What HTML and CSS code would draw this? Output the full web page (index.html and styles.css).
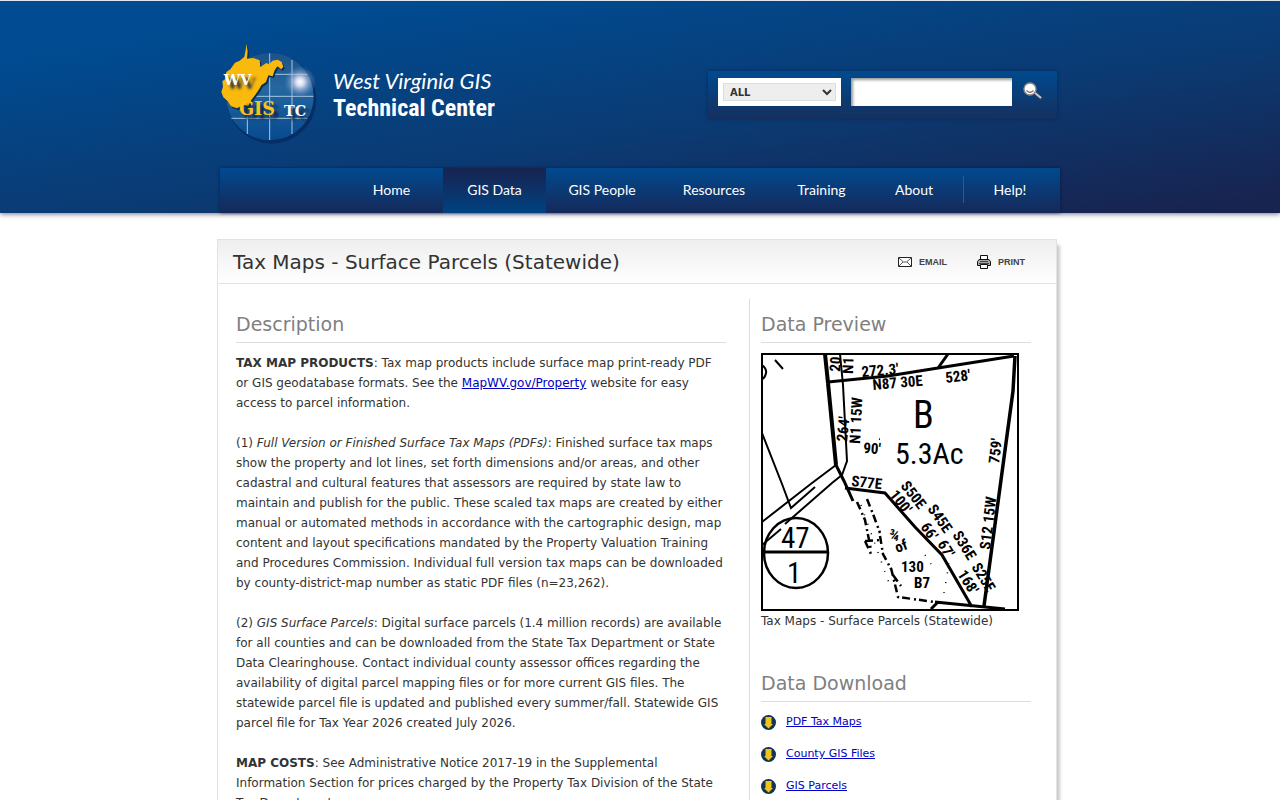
FILE: index.html
```html
<!DOCTYPE html>
<html lang="en">
<head>
<meta charset="utf-8">
<title>Tax Maps - Surface Parcels (Statewide)</title>
<link rel="stylesheet" href="styles.css">
</head>
<body>
<header class="site-header">
  <div class="wrap">
    <div class="masthead">
      <a class="brand" href="#">
        <svg class="globe" viewBox="24 18 300 312" aria-hidden="true">
          <defs>
            <radialGradient id="shine" cx="270" cy="138" r="48" gradientUnits="userSpaceOnUse"><stop offset="0" stop-color="#fff"/><stop offset=".25" stop-color="#d8dcf0"/><stop offset="1" stop-color="#5d86b8" stop-opacity="0"/></radialGradient>
            <linearGradient id="sea" x1="0" y1="0" x2="0" y2="1"><stop offset="0" stop-color="#1c5288"/><stop offset=".4" stop-color="#2567a0"/><stop offset="1" stop-color="#06498e"/></linearGradient>
          </defs>
          <circle cx="185" cy="189" r="134" fill="#062a5c" opacity=".75"/>
          <circle cx="180" cy="182" r="131" fill="url(#sea)"/>
          <g stroke="#a9c6e0" stroke-width="3" fill="none">
            <path d="M112 240V294M179 52V312M246 72V294M140 115H292M50 181H310M64 247H292"/>
          </g>
          <circle cx="270" cy="138" r="48" fill="url(#shine)"/>
          <path d="M109 24l4 22-2 22 18-2 20 7 2 20 18-12 8 4 11-11 15-3 12 7 5 14-6 8-12-9-8 12-6 18-13-3-7 20-14 10-8 14-10 14-12 16-9 18-16-3-18 10-18-6-10-15-13-12-6-16 5-16-2-16 8-6 4-22 12-8 14-20 14-6 14-12 4-20z" fill="#0a2c55" transform="translate(4 5)"/>
          <path d="M109 24l4 22-2 22 18-2 20 7 2 20 18-12 8 4 11-11 15-3 12 7 5 14-6 8-12-9-8 12-6 18-13-3-7 20-14 10-8 14-10 14-12 16-9 18-16-3-18 10-18-6-10-15-13-12-6-16 5-16-2-16 8-6 4-22 12-8 14-20 14-6 14-12 4-20z" fill="#f9b90d"/>
          <g class="globe-text">
            <text x="41" y="146" font-size="44" fill="#fff">WV</text>
            <text x="87" y="237" font-size="53" fill="#f9c21c">GIS</text>
            <text x="222" y="240" font-size="43" fill="#fff">TC</text>
          </g>
        </svg>
        <span class="brand-name"><span class="brand-top">West Virginia GIS</span><span class="brand-bottom">Technical Center</span></span>
      </a>
      <form class="search">
        <span class="scope"><select aria-label="Search scope"><option>ALL</option></select></span>
        <input class="query" type="text" aria-label="Search">
        <button class="go" type="button" aria-label="Search">
          <svg width="20" height="18" viewBox="0 0 20 18"><path d="M11 10l8 7" stroke="#2a4068" stroke-width="4"/><path d="M11 10l7 6" stroke="#c5c9cf" stroke-width="2"/><circle cx="7" cy="7" r="6" fill="#fff" stroke="#8b8a8c" stroke-width="1.4"/><path d="M3.500 8.500q3.500 3.500 7 0" fill="none" stroke="#8a6c60" stroke-width="1.200"/></svg>
        </button>
      </form>
    </div>
    <nav class="nav">
      <a href="#">Home</a><a class="current" href="#">GIS Data</a><a class="people" href="#">GIS People</a><a class="people" href="#">Resources</a><a href="#">Training</a><a class="about" href="#">About</a><a class="help" href="#">Help!</a>
    </nav>
  </div>
</header>
<main class="card">
  <div class="card-head">
    <h1>Tax Maps - Surface Parcels (Statewide)</h1>
    <a class="tool" href="#"><svg width="14" height="10" viewBox="0 0 14 10"><path d="M.5.5h13v9H.5z" fill="#fff" stroke="#222"/><path d="M1 1l4.500 4h3L13 1M1 9l4-4M13 9L9 5" fill="none" stroke="#555"/></svg>EMAIL</a>
    <a class="tool" href="#"><svg width="14" height="14" viewBox="0 0 14 14"><path d="M3.500 5V.5h7V5" fill="#fff" stroke="#111"/><path d="M2 4.500h10l1.500 2v4H.5v-4z" fill="#aaa" stroke="#111"/><path d="M3 6.500h8M2 8.500h10" stroke="#444"/><path d="M3.500 9.500h7v4h-7z" fill="#fff" stroke="#111"/></svg>PRINT</a>
  </div>
  <div class="columns">
    <section class="description">
      <h2>Description</h2>
      <p><strong>TAX MAP PRODUCTS</strong>: Tax map products include surface map print-ready PDF or GIS geodatabase formats. See the <a href="#">MapWV.gov/Property</a> website for easy access to parcel information.</p>
      <p>(1) <em>Full Version or Finished Surface Tax Maps (PDFs)</em>: Finished surface tax maps show the property and lot lines, set forth dimensions and/or areas, and other cadastral and cultural features that assessors are required by state law to maintain and publish for the public. These scaled tax maps are created by either manual or automated methods in accordance with the cartographic design, map content and layout specifications mandated by the Property Valuation Training and Procedures Commission. Individual full version tax maps can be downloaded by county-district-map number as static PDF files (n=23,262).</p>
      <p>(2) <em>GIS Surface Parcels</em>: Digital surface parcels (1.4 million records) are available for all counties and can be downloaded from the State Tax Department or State Data Clearinghouse. Contact individual county assessor offices regarding the availability of digital parcel mapping files or for more current GIS files. The statewide parcel file is updated and published every summer/fall. Statewide GIS parcel file for Tax Year 2026 created July 2026.</p>
      <p><strong>MAP COSTS</strong>: See Administrative Notice 2017-19 in the Supplemental Information Section for prices charged by the Property Tax Division of the State Tax Department.</p>
    </section>
    <aside class="side">
      <section>
        <h2>Data Preview</h2>
        <figure>
          <svg class="map" viewBox="0 0 258 258" role="img" aria-label="Parcel map">
            <rect width="258" height="258" fill="#fff"/>
            <g fill="none" stroke="#000" stroke-width="2">
              <path stroke-width="4" d="M64 1l3 29"/>
              <path stroke-width="4" d="M67 30l8 82"/>
              <path stroke-width="3" d="M75 112l8 16 9 20"/>
              <path d="M79 1l3 31 4 76-5 14-10 8-47 41M75 112l-24 18-50 39M1 80l20 51 9 24 24-21M1 192l19-16M14 7l8 9M1 12q5 4 4 8-1 5-4 6"/>
              <ellipse cx="35" cy="200" rx="32" ry="35" stroke-width="2.500"/>
              <path stroke-width="3" d="M2 199h65"/>
              <path stroke-width="3" d="M67 29l60-6 50-8 76-12M187 1l-10 14"/>
              <path stroke-width="3.500" d="M254 3l-2 35-12 89-17 126"/>
              <path stroke-width="3" d="M84 135l40 5 30 34 27 28 30 52M174 249l70 7M170 256l6-6"/>
              <path stroke-width="2.500" stroke-dasharray="8 4 2 3" d="M96 149l8 18 6 30M130 215l7 29 37 5M106 146l6 15 7 19M104 188l16-1M104 188l6 13M119 183l3 18 8 15M132 222l8 11"/>
              <path stroke-width="1.500" stroke-dasharray="1 9" d="M100 152l28 78M183 240l5-30M164 202l10 15M118 86l6 1"/>
            </g>
            <g class="plot">
              <text x="101" y="24" transform="rotate(-5 101 24)">272.3'</text>
              <text x="112" y="37" transform="rotate(-5 112 37)">N87 30E</text>
              <text x="185" y="30" transform="rotate(-7 185 30)">528'</text>
              <text x="79" y="19" transform="rotate(-86 79 19)">20</text>
              <text x="92" y="21" transform="rotate(-88 92 21)">N1</text>
              <text x="86" y="89" transform="rotate(-84 86 89)">264'</text>
              <text x="99" y="91" transform="rotate(-87 99 91)">N1 15W</text>
              <text x="102" y="100" transform="rotate(4 102 100)">90'</text>
              <text x="90" y="133" transform="rotate(6 90 133)">S77E</text>
              <text x="238" y="111" transform="rotate(-83 238 111)">759'</text>
              <text x="229" y="197" transform="rotate(-83 229 197)">S12 15W</text>
              <text x="139" y="133" transform="rotate(52 139 133)">S50E</text>
              <text x="128" y="142" transform="rotate(52 128 142)">100'</text>
              <text x="166" y="156" transform="rotate(55 166 156)">S45E</text>
              <text x="159" y="174" transform="rotate(55 159 174)">66'</text>
              <text x="191" y="182" transform="rotate(58 191 182)">S36E</text>
              <text x="176" y="191" transform="rotate(58 176 191)">67'</text>
              <text x="210" y="214" transform="rotate(58 210 214)">S25E</text>
              <text x="196" y="221" transform="rotate(58 196 221)">168'</text>
              <text x="127" y="186" transform="rotate(12 127 186)">¾</text>
              <text x="136" y="200" transform="rotate(-20 136 200)">of</text>
              <text x="140" y="219">130</text>
              <text x="153" y="235">B7</text>
              <text class="big" x="152" y="75">B</text>
              <text class="mid" x="134" y="111">5.3Ac</text>
              <text class="mid tight" x="20" y="195">47</text>
              <text class="mid tight" x="26" y="230">1</text>
            </g>
            <path d="M1 1h256v256H1z" fill="none" stroke="#000" stroke-width="2"/>
          </svg>
          <figcaption>Tax Maps - Surface Parcels (Statewide)</figcaption>
        </figure>
      </section>
      <section>
        <h2>Data Download</h2>
        <ul class="downloads">
          <li><svg viewBox="0 0 15 15"><circle cx="7.500" cy="7.500" r="7.500" fill="#123456"/><path d="M4.500 2h6v7h1.500L7.500 13.500 3 9h1.500z" fill="#f2c31a"/></svg><a href="#">PDF Tax Maps</a></li>
          <li><svg viewBox="0 0 15 15"><circle cx="7.500" cy="7.500" r="7.500" fill="#123456"/><path d="M4.500 2h6v7h1.500L7.500 13.500 3 9h1.500z" fill="#f2c31a"/></svg><a href="#">County GIS Files</a></li>
          <li><svg viewBox="0 0 15 15"><circle cx="7.500" cy="7.500" r="7.500" fill="#123456"/><path d="M4.500 2h6v7h1.500L7.500 13.500 3 9h1.500z" fill="#f2c31a"/></svg><a href="#">GIS Parcels</a></li>
        </ul>
      </section>
    </aside>
  </div>
</main>
</body>
</html>
```
FILE: styles.css
```css
* { box-sizing: border-box; }
body { margin: 0; background: #fff; color: #333; font: 12px/20px "DejaVu Sans", sans-serif; }
h1, h2, p, ul, figure { margin: 0; padding: 0; font-weight: normal; }
a { color: #0000c4; }

.site-header { border-top: 1px solid #dce6f0; background: linear-gradient(172deg, #004b91 15%, #0b3a72 58%, #18234f 97%); box-shadow: 0 1px 5px rgba(20, 20, 60, .6); }
.wrap { max-width: 840px; margin: 0 auto; }
.masthead { display: flex; justify-content: space-between; align-items: flex-start; padding: 41px 3px 0 0; height: 167px; }
.brand { display: flex; align-items: flex-start; gap: 15px; color: #fff; text-decoration: none; }
.globe { width: 100px; height: 104px; margin-left: -2px; }
.globe-text { font-family: "DejaVu Serif", serif; font-weight: bold; text-shadow: 4px 4px 3px #12243f; }
.brand-name { display: flex; flex-direction: column; padding-top: 25px; }
.brand-top { font: italic 400 22px/28px Lato, sans-serif; white-space: nowrap; }
.brand-bottom { font: bold 24px/26px "Roboto Condensed", Roboto, sans-serif; white-space: nowrap; }

.search { display: flex; align-items: flex-start; gap: 10px; margin-top: 29px; padding: 7px 14px 13px 10px; background: linear-gradient(#004a8f, #14305f); box-shadow: 0 0 4px rgba(0, 20, 60, .45); }
.scope { width: 123px; height: 28px; padding: 5px; background: #fff; }
.scope select { display: block; width: 113px; height: 18px; border: 1px solid #ddd; border-radius: 0; background: #eee; color: #333; font: bold 10px "DejaVu Sans", sans-serif; padding: 0 2px; }
.query { width: 161px; height: 28px; border: 0; background: #fff; box-shadow: inset 2px 2px 3px #999; }
.go { border: 0; padding: 4px 0 0; background: none; line-height: 0; margin-left: 1px; }

.nav { display: flex; height: 45px; padding: 0 4px 0 120px; background: linear-gradient(#004a8f, #16295a); box-shadow: 0 0 3px rgba(0, 15, 50, .6); }
.nav a { flex: 0 0 103px; color: #fff; text-align: center; text-decoration: none; font: 14px/43px Lato, sans-serif; }
.nav .current { background: linear-gradient(#18234f, #004282); }
.nav .people { flex-basis: 112px; }
.nav .about { flex-basis: 82px; margin-right: 8px; }
.nav .help { flex: 1; height: 27px; margin-top: 8px; line-height: 27px; border-left: 1px solid #35588a; }

.card { max-width: 840px; margin: 26px auto 0; position: relative; right: 3px; border: 1px solid #e2e2e2; box-shadow: 4px 5px 3px -1px #ccc; }
.card-head { display: flex; align-items: center; gap: 30px; height: 44px; padding: 0 31px 0 15px; border-bottom: 1px solid #e2e2e2; background: linear-gradient(#eee, #fff); }
.card-head h1 { flex: 1; font-size: 20px; }
.tool { display: flex; align-items: center; gap: 7px; color: #444; font: bold 9px/14px "Liberation Sans", sans-serif; text-decoration: none; }
.columns { display: flex; padding-top: 15px; }
.description { flex: 1; padding: 12px 23px 0 18px; }
.side { flex: 0 0 307px; padding: 12px 25px 0 11px; border-left: 1px solid #ddd; }
h2 { margin-bottom: 10px; padding: 1px 0 6px; border-bottom: 1px solid #ddd; color: #808080; font-size: 19px; line-height: 24px; }
.description p { margin-bottom: 20px; }
.map { display: block; width: 258px; height: 258px; }
.plot { font: bold 15px "Roboto Condensed", Roboto, sans-serif; }
.plot .big { font: 38px "Roboto Condensed", Roboto, sans-serif; }
.plot .mid { font: 30px "Roboto Condensed", Roboto, sans-serif; }
.plot .tight { font-size: 29px; }
figure { margin-bottom: 39px; }
.downloads { list-style: none; font-size: 11px; }
.downloads li { display: flex; gap: 10px; margin-bottom: 12px; }
.downloads svg { width: 15px; height: 15px; margin-top: 3px; }
```
